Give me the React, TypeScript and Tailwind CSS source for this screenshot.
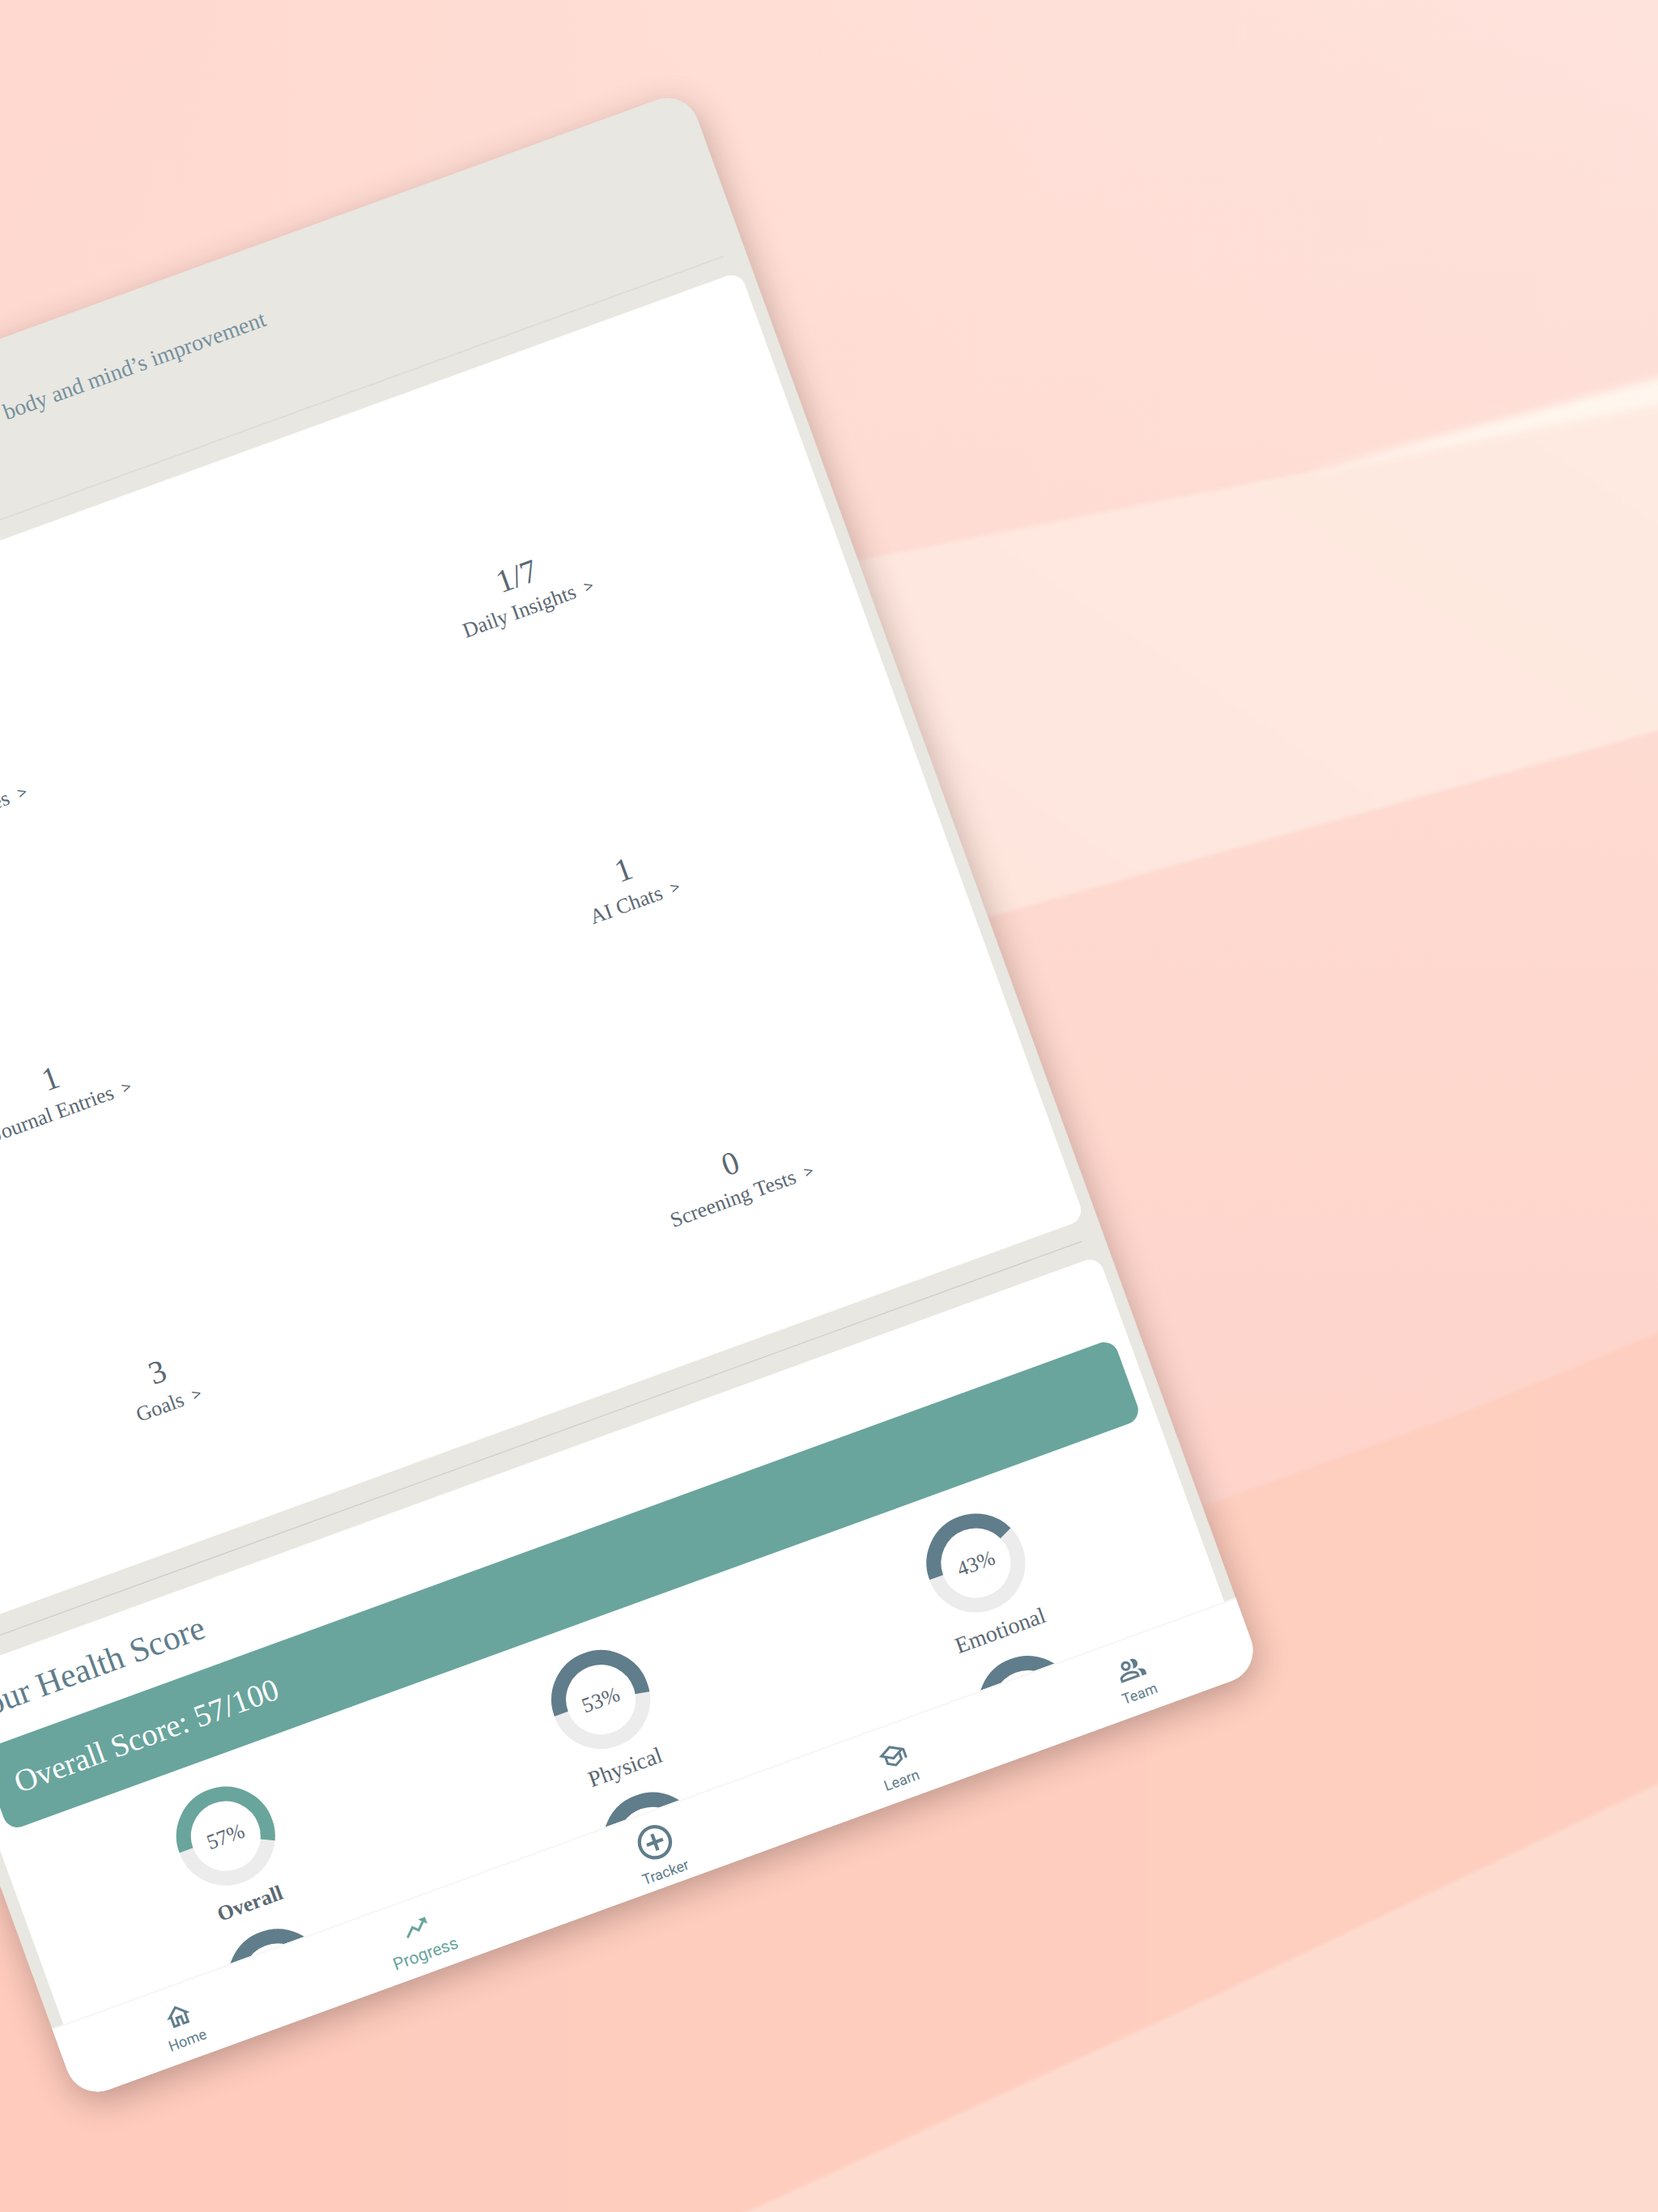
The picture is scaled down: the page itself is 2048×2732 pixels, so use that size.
import type { IconType } from 'react-icons';
import {
  MdAddCircleOutline,
  MdOutlineHome,
  MdOutlinePeopleAlt,
  MdOutlineSchool,
  MdTrendingUp,
} from 'react-icons/md';
import clsx from 'clsx';

type Stat = { label: string; value: string };
type Score = { label: string; percent: number; isOverall?: boolean };
type Tab = { label: string; icon: IconType; isActive?: boolean; isLarge?: boolean };

const STATS: Stat[] = [
  { label: 'Daily Activities', value: '0' },
  { label: 'Daily Insights', value: '1/7' },
  { label: 'Journal Entries', value: '1' },
  { label: 'AI Chats', value: '1' },
  { label: 'Goals', value: '3' },
  { label: 'Screening Tests', value: '0' },
];

const SCORES: Score[] = [
  { label: 'Overall', percent: 57, isOverall: true },
  { label: 'Physical', percent: 53 },
  { label: 'Emotional', percent: 43 },
];

// The next row of rings, only partly scrolled into view.
const NEXT_SCORES = [60, 55, 50];

const TABS: Tab[] = [
  { label: 'Home', icon: MdOutlineHome },
  { label: 'Progress', icon: MdTrendingUp, isActive: true },
  { label: 'Tracker', icon: MdAddCircleOutline, isLarge: true },
  { label: 'Learn', icon: MdOutlineSchool },
  { label: 'Team', icon: MdOutlinePeopleAlt },
];

export default function App() {
  return (
    <main className="relative min-h-screen w-full overflow-hidden bg-[#ffd9cf]">
      <Backdrop />
      <div className="absolute top-[642px] -left-[30%] flex h-[2078px] w-[76%] origin-top-left -rotate-20 flex-col overflow-hidden rounded-[40px] bg-[#e8e7e1] font-['Liberation_Serif',serif] text-[#5b6873] shadow-[0_12px_40px_rgba(50,30,25,0.3)]">
        <div className="min-h-0 flex-1 overflow-hidden">
          <header className="flex h-[209px] justify-center pt-[72px]">
            <p className="text-[28px] leading-8 text-[#75909e]">for body and mind’s improvement</p>
          </header>
          <hr className="mx-7 border-t-2 border-[#dcddd9]" />
          <StatsCard />
          <hr className="mx-7 mt-6 mb-[23px] border-t border-[#c5cac9]" />
          <HealthScoreCard />
        </div>
        <TabBar />
      </div>
    </main>
  );
}

function StatsCard() {
  return (
    <section className="mx-[15px] mt-[23px] grid h-[1246px] grid-cols-2 grid-rows-3 rounded-[18px] bg-white pt-[88px] pr-3 pl-2">
      {STATS.map((stat) => (
        <a
          key={stat.label}
          href="#"
          className="flex flex-col items-center justify-center whitespace-nowrap"
        >
          <span className="text-[40px] leading-10">{stat.value}</span>
          <span className="flex items-center gap-3 pt-0.5 text-[26px] leading-10">
            {stat.label}
            <span className="font-['Noto_Sans',sans-serif] text-xl leading-10">&gt;</span>
          </span>
        </a>
      ))}
    </section>
  );
}

function HealthScoreCard() {
  return (
    <section className="mx-[15px] rounded-t-[18px] bg-white">
      <h2 className="px-5 pt-7 pb-[26px] text-[42px] leading-12 text-[#607d8b]">
        Your Health Score
      </h2>
      <p className="mx-[18px] flex h-[106px] items-center rounded-[18px] bg-[#69a59d] px-7 text-[39px] text-white">
        Overall Score: 57/100
      </p>
      <div className="grid grid-cols-3 gap-y-[17px] pt-9 pr-[26px] pl-[21px]">
        {SCORES.map((score) => (
          <div key={score.label} className="flex flex-col items-center">
            <div className="relative">
              <Ring
                percent={score.percent}
                className={score.isOverall ? 'text-[#69a59d]' : 'text-[#607d8b]'}
              />
              <span className="absolute inset-0 flex items-center justify-center text-[26px]">
                {score.percent}%
              </span>
            </div>
            <span
              className={clsx(
                'pt-2.5 pb-0.5 leading-9',
                score.isOverall ? 'text-[26px] font-bold' : 'text-[28px]',
              )}
            >
              {score.label}
            </span>
          </div>
        ))}
        {NEXT_SCORES.map((percent) => (
          <div key={percent} className="flex justify-center">
            <Ring percent={percent} className="text-[#607d8b]" />
          </div>
        ))}
      </div>
    </section>
  );
}

function Ring({ percent, className }: { percent: number; className: string }) {
  return (
    <svg viewBox="0 0 122 122" className={clsx('size-[122px]', className)} fill="none" aria-hidden>
      <circle cx="61" cy="61" r="52" stroke="#ececec" strokeWidth="18" />
      <circle
        cx="61"
        cy="61"
        r="52"
        stroke="currentColor"
        strokeWidth="18"
        pathLength="100"
        strokeDasharray={`${percent} 100`}
        transform="rotate(180 61 61)"
      />
    </svg>
  );
}

function TabBar() {
  return (
    <nav className="-mx-1 grid h-[95px] shrink-0 grid-cols-5 border-t-2 border-[#f7f7f7] bg-white pt-1 font-[Roboto,sans-serif]">
      {TABS.map(({ label, icon: Icon, isActive, isLarge }) => (
        <button
          key={label}
          type="button"
          className={clsx(
            'flex flex-col items-center justify-center gap-1',
            isActive ? 'text-[21px] leading-6 text-[#69a59d]' : 'text-lg leading-5 text-[#607d8b]',
          )}
        >
          <Icon className={isLarge ? 'size-[51px]' : 'size-9'} aria-hidden />
          {label}
        </button>
      ))}
    </nav>
  );
}

/** Soft pink wall with diagonal bands of light. */
function Backdrop() {
  return (
    <svg
      viewBox="0 0 2048 2732"
      preserveAspectRatio="none"
      className="absolute inset-0 size-full"
      aria-hidden
    >
      <defs>
        <linearGradient id="wall" x1="0" y1="0" x2="1" y2="0">
          <stop offset="0" stopColor="#ffd8cf" />
          <stop offset="0.45" stopColor="#ffded5" />
          <stop offset="1" stopColor="#fee3dc" />
        </linearGradient>
        <linearGradient id="wallFade" x1="0" y1="0" x2="0" y2="1">
          <stop offset="0" stopColor="#fedbd2" stopOpacity="0" />
          <stop offset="0.26" stopColor="#fedbd2" stopOpacity="0.8" />
          <stop offset="0.45" stopColor="#fed8ce" />
          <stop offset="0.66" stopColor="#fed4cb" />
        </linearGradient>
        <linearGradient id="band" x1="0" y1="1" x2="1" y2="0">
          <stop offset="0" stopColor="#fee5dd" />
          <stop offset="1" stopColor="#feeae1" />
        </linearGradient>
        <linearGradient id="lower" x1="0" y1="0" x2="1" y2="0">
          <stop offset="0" stopColor="#fecbbd" />
          <stop offset="1" stopColor="#fecfc0" />
        </linearGradient>
        <filter id="edge" x="-5%" y="-5%" width="110%" height="110%">
          <feGaussianBlur stdDeviation="2" />
        </filter>
        <filter id="soft" x="-10%" y="-50%" width="120%" height="200%">
          <feGaussianBlur stdDeviation="6" />
        </filter>
      </defs>
      <rect width="2048" height="2732" fill="url(#wall)" />
      <rect width="2048" height="2732" fill="url(#wallFade)" />
      <g filter="url(#edge)">
        <path d="M1000 700 1070 690 1620 582 2068 480V897L1230 1130 1000 1200Z" fill="url(#band)" />
        <path d="M-20 2307 1500 1856 1800 1748 2068 1638V2752H-20Z" fill="url(#lower)" />
        <path d="M880 2752 1500 2465 2068 2194V2752Z" fill="#fddccf" />
      </g>
      <path d="M1610 584 2068 462V496Z" fill="#fff7ef" filter="url(#soft)" />
    </svg>
  );
}
